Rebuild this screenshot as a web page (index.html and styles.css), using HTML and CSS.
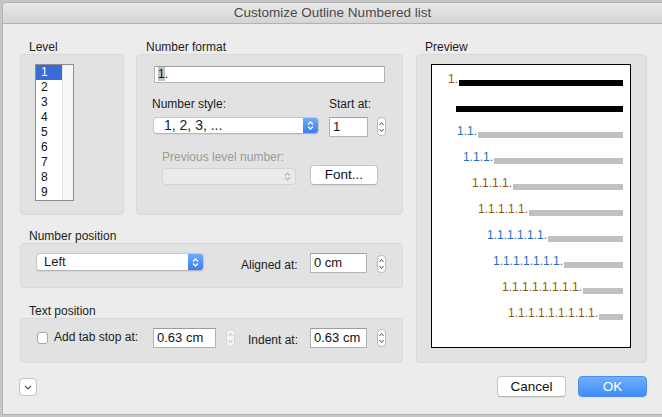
FILE: index.html
```html
<!DOCTYPE html>
<html>
<head>
<meta charset="utf-8">
<link rel="stylesheet" href="styles.css">
</head>
<body>
<div class="window">
  <div class="titlebar">Customize Outline Numbered list</div>
  <div class="content">
    <div class="main">
      <div class="leftcol">
        <div class="toprow">
          <section class="level-sec">
            <div class="sec-label">Level</div>
            <div class="box level-box">
              <div class="listbox">
                <div class="list-items">
                  <div class="li sel">1</div>
                  <div class="li">2</div>
                  <div class="li">3</div>
                  <div class="li">4</div>
                  <div class="li">5</div>
                  <div class="li">6</div>
                  <div class="li">7</div>
                  <div class="li">8</div>
                  <div class="li">9</div>
                </div>
                <div class="list-scroll"></div>
              </div>
            </div>
          </section>
          <section class="format-sec">
            <div class="sec-label fmt-label">Number format</div>
            <div class="box format-box">
              <div class="field fmt-field"><span class="hl">1</span>.</div>
              <div class="fmt-grid">
                <div class="lbl">Number style:</div>
                <div></div>
                <div class="lbl">Start at:</div>
                <div></div>
                <div></div>
                <div class="popup style-popup">
                  <div class="popup-text big">1, 2, 3, ...</div>
                  <div class="popup-arrow"><svg width="7" height="11" viewBox="0 0 7 11"><path d="M1 4.5 L3.5 2 L6 4.5 M1 6.5 L3.5 9 L6 6.5" fill="none" stroke="#fff" stroke-width="1.3"/></svg></div>
                </div>
                <div></div>
                <div class="field start-field">1</div>
                <div></div>
                <div class="stepper"><svg width="7" height="16" viewBox="0 0 7 16"><path d="M1.5 6 L3.5 3.5 L5.5 6 M1.5 10 L3.5 12.5 L5.5 10" fill="none" stroke="#555" stroke-width="1"/></svg></div>
              </div>
              <div class="prev-label">Previous level number:</div>
              <div class="prev-row">
                <div class="popup disabled prev-popup">
                  <div class="popup-text"></div>
                  <div class="dis-arrow"><svg width="7" height="11" viewBox="0 0 7 11"><path d="M1 4.5 L3.5 2 L6 4.5 M1 6.5 L3.5 9 L6 6.5" fill="none" stroke="#b4b4b4" stroke-width="1.1"/></svg></div>
                </div>
                <div class="button font-btn">Font...</div>
              </div>
            </div>
          </section>
        </div>
        <section class="pos-sec">
          <div class="sec-label">Number position</div>
          <div class="box row-box">
            <div class="popup left-popup">
              <div class="popup-text">Left</div>
              <div class="popup-arrow"><svg width="7" height="11" viewBox="0 0 7 11"><path d="M1 4.5 L3.5 2 L6 4.5 M1 6.5 L3.5 9 L6 6.5" fill="none" stroke="#fff" stroke-width="1.3"/></svg></div>
            </div>
            <div class="lbl aligned-lbl">Aligned at:</div>
            <div class="field cm-field">0 cm</div>
            <div class="stepper step-b"><svg width="7" height="16" viewBox="0 0 7 16"><path d="M1.5 6 L3.5 3.5 L5.5 6 M1.5 10 L3.5 12.5 L5.5 10" fill="none" stroke="#555" stroke-width="1"/></svg></div>
          </div>
        </section>
        <section class="text-sec">
          <div class="sec-label">Text position</div>
          <div class="box row-box">
            <div class="checkbox"></div>
            <div class="lbl tab-lbl">Add tab stop at:</div>
            <div class="field tab-field">0.63 cm</div>
            <div class="stepper step-c disabled-step"><svg width="7" height="16" viewBox="0 0 7 16"><path d="M1.5 6 L3.5 3.5 L5.5 6 M1.5 10 L3.5 12.5 L5.5 10" fill="none" stroke="#bdbdbd" stroke-width="1"/></svg></div>
            <div class="lbl indent-lbl">Indent at:</div>
            <div class="field cm-field">0.63 cm</div>
            <div class="stepper step-c"><svg width="7" height="16" viewBox="0 0 7 16"><path d="M1.5 6 L3.5 3.5 L5.5 6 M1.5 10 L3.5 12.5 L5.5 10" fill="none" stroke="#555" stroke-width="1"/></svg></div>
          </div>
        </section>
      </div>
      <section class="preview-sec">
        <div class="sec-label">Preview</div>
        <div class="box preview-box">
          <div class="page">
            <div class="prow r1"><span class="num brown">1.</span><span class="bar black"></span></div>
            <div class="prow r2"><span class="bar black"></span></div>
            <div class="prow r3"><span class="num blue">1.1.</span><span class="bar"></span></div>
            <div class="prow r4"><span class="num blue">1.1.1.</span><span class="bar"></span></div>
            <div class="prow r5"><span class="num brown">1.1.1.1.</span><span class="bar"></span></div>
            <div class="prow r6"><span class="num brown">1.1.1.1.1.</span><span class="bar"></span></div>
            <div class="prow r7"><span class="num blue">1.1.1.1.1.1.</span><span class="bar"></span></div>
            <div class="prow r8"><span class="num blue">1.1.1.1.1.1.1.</span><span class="bar"></span></div>
            <div class="prow r9"><span class="num brown">1.1.1.1.1.1.1.1.</span><span class="bar"></span></div>
            <div class="prow r10"><span class="num brown">1.1.1.1.1.1.1.1.1.</span><span class="bar"></span></div>
          </div>
        </div>
      </section>
    </div>
    <div class="footer">
      <div class="disclosure"><svg width="8" height="5" viewBox="0 0 8 5"><path d="M1 1 L4 4 L7 1" fill="none" stroke="#555" stroke-width="1.2"/></svg></div>
      <div class="spacer"></div>
      <div class="button cancel-btn">Cancel</div>
      <div class="button ok-btn">OK</div>
    </div>
  </div>
</div>
</body>
</html>
```

FILE: styles.css
```css
* { box-sizing: border-box; }
html, body { margin: 0; padding: 0; }
body {
  width: 662px;
  height: 417px;
  overflow: hidden;
  background: #c6c6c6;
  padding: 2px 0 0 2px;
  font-family: "Liberation Sans", Arial, sans-serif;
  font-size: 12px;
  color: #1c1c1c;
}
.window {
  width: 660px;
  height: 413px;
  background: #ececec;
  border: 1px solid #b2b2b2;
  border-right: none;
  border-radius: 5px 0 0 0;
  overflow: hidden;
}
.titlebar {
  height: 21px;
  line-height: 20px;
  border-bottom: 1px solid #b1b1b1;
  background: linear-gradient(#e9e9e9, #d4d4d4);
  text-align: center;
  font-size: 13.5px;
  color: #4a4a4a;
}
.content { padding: 16px 15px 0 17px; }
.main { display: flex; gap: 13px; }
.leftcol { width: 383px; }
.toprow { display: flex; gap: 12px; }
.sec-label { height: 14px; line-height: 14px; padding-left: 9px; }
.fmt-label { padding-left: 10px; }
.box {
  background: #e2e2e2;
  border: 1px solid #d9d9d9;
  border-radius: 4px;
}
.level-box { width: 104px; height: 161px; padding: 9px 0 0 14px; }
.format-box { width: 267px; height: 161px; padding: 11px 0 0 17px; }

.listbox {
  width: 39px;
  height: 137px;
  border: 1px solid #8e8e8e;
  background: #fff;
  display: flex;
}
.list-items { width: 26px; }
.li { height: 15px; line-height: 15px; padding-left: 5px; color: #111; }
.li.sel { background: #3b6bd6; color: #fff; }
.list-scroll { flex: 1; background: #f6f6f6; border-left: 1px solid #e6e6e6; }

.field {
  background: #fff;
  border: 1px solid #b3b3b3;
  border-top-color: #9d9d9d;
  font-size: 13px;
  padding-left: 3px;
  line-height: 18px;
  color: #111;
}
.fmt-field { width: 231px; height: 17px; font-size: 12px; line-height: 15px; }
.hl { background: #c2c2c2; }

.fmt-grid {
  display: grid;
  grid-template-columns: 167px 10px 39px 9px 9px;
  grid-template-rows: 14px 20px;
  row-gap: 6px;
  margin: 14px 0 0 -2px;
}
.lbl { line-height: 14px; white-space: nowrap; }

.popup {
  display: flex;
  background: #fff;
  border: 1px solid #c6c6c6;
  border-bottom-color: #b5b5b5;
  border-radius: 4px;
  box-shadow: 0 1px 1px rgba(0,0,0,0.06);
  overflow: hidden;
}
.popup-text { flex: 1; white-space: nowrap; }
.popup-text.big { font-size: 14px; line-height: 15px; padding-left: 10px; }
.popup-arrow {
  width: 15px;
  background: linear-gradient(#6eaafa, #3a7df0);
  display: flex;
  align-items: center;
  justify-content: center;
}
.style-popup { margin-left: 1px; width: 166px; height: 17px; }
.start-field { width: 39px; height: 20px; }
.stepper {
  width: 9px;
  height: 19px;
  background: #fff;
  border: 1px solid #bcbcbc;
  border-radius: 4px;
  display: flex;
  align-items: center;
  justify-content: center;
}
.stepper svg { flex: none; }

.prev-label { margin: 13px 0 0 8px; line-height: 14px; color: #9b9b9b; }
.prev-row { display: flex; margin: 1px 0 0 8px; align-items: flex-start; }
.popup.disabled {
  background: #ebebeb;
  border-color: #d3d3d3;
  box-shadow: none;
}
.prev-popup { width: 134px; height: 17px; margin-top: 3px; }
.dis-arrow { width: 15px; display: flex; align-items: center; justify-content: center; }

.button {
  background: #fff;
  border: 1px solid #c4c4c4;
  border-bottom-color: #b2b2b2;
  border-radius: 4px;
  box-shadow: 0 1px 1px rgba(0,0,0,0.06);
  text-align: center;
  font-size: 13.5px;
  color: #111;
}
.font-btn { width: 68px; height: 20px; line-height: 18px; margin-left: 14px; }

.pos-sec { margin-top: 14px; }
.text-sec { margin-top: 16px; }
.row-box {
  height: 45px;
  padding: 9px 0 0 15px;
  display: flex;
  align-items: flex-start;
}
.left-popup { width: 168px; height: 18px; }
.left-popup .popup-text { font-size: 13px; line-height: 16px; padding-left: 7px; }
.aligned-lbl { width: 69px; margin: 5px 0 0 37px; }
.cm-field { width: 57px; height: 20px; }
.step-b { margin: 2px 0 0 10px; height: 18px; }

.checkbox {
  width: 11px;
  height: 12px;
  margin: 4px 0 0 1px;
  background: #fff;
  border: 1px solid #a9a9a9;
  border-radius: 3px;
}
.tab-lbl { width: 99px; margin: 2px 0 0 6px; }
.tab-field { width: 63px; height: 20px; }
.step-c { margin: 1px 0 0 10px; height: 18px; }
.disabled-step { border-color: #d6d6d6; background: #f4f4f4; }
.indent-lbl { width: 62px; margin: 5px 0 0 13px; }

.preview-sec { width: 231px; }
.preview-box { height: 309px; padding: 9px 0 0 14px; }
.page {
  width: 200px;
  height: 284px;
  background: #fff;
  border: 1px solid #000;
  padding: 8px 7px 0 0;
  display: flex;
  flex-direction: column;
  gap: 13px;
}
.prow { display: flex; height: 13px; align-items: flex-end; }
.num {
  align-self: flex-start;
  font-size: 12px;
  line-height: 12px;
  margin-right: 1px;
  white-space: nowrap;
}
.brown { color: #8e5716; }
.blue { color: #1d6fc0; }
.bar { flex: 1; height: 6px; background: #c0c0c0; }
.bar.black { background: #000; }
.r1 { margin-left: 16px; }
.r2 { margin-left: 24px; }
.r3 { margin-left: 25px; }
.r4 { margin-left: 31px; }
.r5 { margin-left: 40px; }
.r6 { margin-left: 46px; }
.r7 { margin-left: 55px; }
.r8 { margin-left: 61px; }
.r9 { margin-left: 70px; }
.r10 { margin-left: 76px; }

.footer { display: flex; align-items: flex-start; margin-top: 13px; }
.disclosure {
  width: 18px;
  height: 18px;
  margin: 2px 0 0 -1px;
  background: #fff;
  border: 1px solid #c4c4c4;
  border-radius: 4px;
  display: flex;
  align-items: center;
  justify-content: center;
}
.spacer { flex: 1; }
.cancel-btn { width: 69px; height: 21px; line-height: 19px; }
.ok-btn {
  width: 69px;
  height: 21px;
  line-height: 19px;
  margin-left: 12px;
  background: linear-gradient(#6fb0fb, #3f8cf6);
  border-color: #4a8ef0;
  color: #fff;
}
```
